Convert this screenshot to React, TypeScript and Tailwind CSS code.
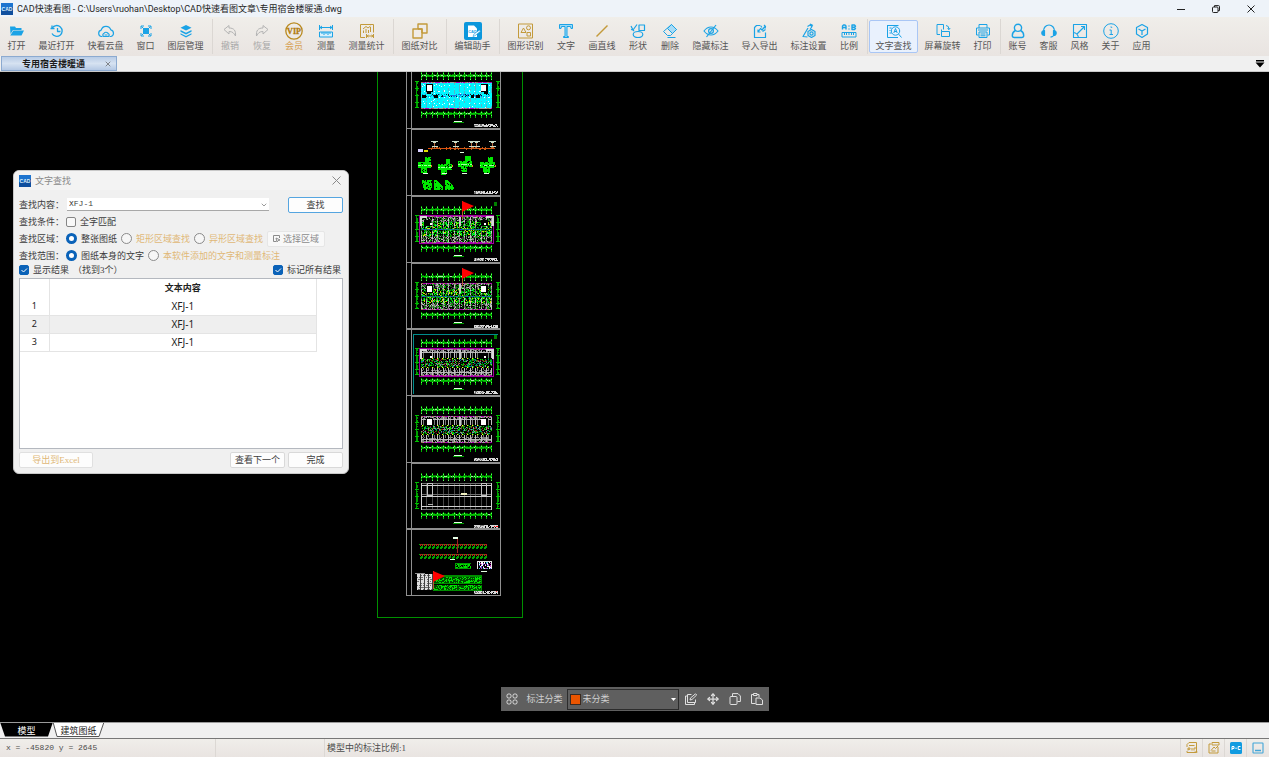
import { ReactNode, useState } from "react";
import { ChevronDown, Move, X } from "lucide-react";

type Tool = {
  label: string;
  icon: ReactNode;
  width: string;
  tone?: string;
  active?: boolean;
  disabled?: boolean;
};

const W2 = "w-[31px]";
const W2_WIDE = "w-8";
const W3 = "w-10";
const W4 = "w-[49px]";

const BLUE = "#1ba3e6";
const GOLD = "#c39a3b";

type IconProps = { color?: string; children: ReactNode; width?: number };

function Icon({ color = BLUE, children, width = 1 }: IconProps) {
  return (
    <svg
      aria-hidden="true"
      className="size-[18px] shrink-0"
      fill="none"
      stroke={color}
      strokeLinejoin="round"
      strokeWidth={width}
      viewBox="-1 -1 18 18"
    >
      {children}
    </svg>
  );
}

function AppLogo() {
  return (
    <svg aria-hidden="true" className="size-3 shrink-0" viewBox="0 0 12 12">
      <rect fill="#0f4f9e" height="12" width="12" />
      <path d="M0 0h12v4L0 7z" fill="#1d74cf" />
      <text
        fill="#dff1ff"
        fontFamily="Liberation Sans"
        fontSize="5"
        fontWeight="700"
        textAnchor="middle"
        x="6"
        y="8"
      >
        CAD
      </text>
    </svg>
  );
}

const toolGroups: Tool[][] = [
  [
    {
      label: "打开",
      width: W2,
      icon: (
        <Icon>
          <path d="M1 3.500h5l1 1.500h5.500v2H4L1.500 11z" fill={BLUE} stroke="none" />
          <path d="M4.400 7.500H15L12.500 12.500H1.200z" fill={BLUE} stroke="none" />
        </Icon>
      ),
    },
    {
      label: "最近打开",
      width: W4,
      icon: (
        <Icon width={1.3}>
          <path d="M3.200 5A5.400 5.400 0 1 1 3 10.500" />
          <path d="M1.500 5.500h4M3 2.500v3M8.500 5v3.500h3" />
        </Icon>
      ),
    },
    {
      label: "快看云盘",
      width: W4,
      icon: (
        <Icon width={1.2}>
          <path d="M4.500 13.500h-1a3.200 3.200 0 0 1-.3-6.300 5 5 0 0 1 9.600-.3 3.400 3.400 0 0 1 .2 6.600h-1.500" />
          <path d="M5.500 13.500q-1.500-2 .3-3 2-2.500 4.400 0 1.800 1 .3 3zM6.500 12h3" />
        </Icon>
      ),
    },
    {
      label: "窗口",
      width: W2,
      icon: (
        <Icon>
          <rect fill={BLUE} height="6" stroke="none" width="6" x="5" y="5" />
          <path d="M3 6V3h3M10 3h3v3M13 10v3h-3M6 13H3v-3M3.500 3.500l2 2M12.500 3.500l-2 2M12.500 12.500l-2-2M3.500 12.500l2-2" />
        </Icon>
      ),
    },
    {
      label: "图层管理",
      width: W4,
      icon: (
        <Icon>
          <path d="M8 2l5.500 2.800L8 7.600 2.500 4.800z" fill={BLUE} stroke="none" />
          <path d="M2.500 7L8 9.700 13.500 7v1.800L8 11.600 2.500 8.800z" fill={BLUE} stroke="none" />
          <path d="M2.500 10.300L8 13l5.500-2.700v1.300L8 14.500l-5.500-2.900z" fill={BLUE} stroke="none" />
        </Icon>
      ),
    },
  ],
  [
    {
      label: "撤销",
      width: W2_WIDE,
      tone: "text-[#a9a9a9]",
      disabled: true,
      icon: (
        <Icon color="#b4b4b4">
          <path d="M2 6.500L7 2.500v2.500c5 0 7 2.500 6.500 8-1.500-3-3-4.500-6.500-4.500v2.500z" />
        </Icon>
      ),
    },
    {
      label: "恢复",
      width: W2_WIDE,
      tone: "text-[#a9a9a9]",
      disabled: true,
      icon: (
        <Icon color="#b4b4b4">
          <path d="M14 6.500L9 2.500v2.500c-5 0-7 2.500-6.500 8 1.500-3 3-4.500 6.500-4.500v2.500z" />
        </Icon>
      ),
    },
    {
      label: "会员",
      width: W2_WIDE,
      tone: "text-[#d6a050]",
      icon: (
        <Icon color="#b98a20" width={1.3}>
          <circle cx="8" cy="8" r="8.2" />
          <text
            fill="#b07c10"
            fontFamily="Liberation Serif"
            fontSize="8"
            fontWeight="700"
            stroke="#b07c10"
            strokeWidth=".3"
            textAnchor="middle"
            x="8"
            y="10.800"
          >
            VIP
          </text>
        </Icon>
      ),
    },
    {
      label: "测量",
      width: W2_WIDE,
      icon: (
        <Icon>
          <path d="M1.500 2v5M14.500 2v5M2 4.500h12M4 3L2 4.500 4 6M12 3l2 1.500L12 6" />
          <rect fill="#d9f0fb" height="5" width="13" x="1.500" y="9" />
          <path d="M4 9v2M6 9v3M8 9v2M10 9v3M12 9v2" />
        </Icon>
      ),
    },
    {
      label: "测量统计",
      width: W4,
      icon: (
        <Icon color={GOLD}>
          <path d="M6 14.500H1.500v-13h13v8" />
          <path d="M4.500 10V7.500M7 10V6M9.500 10V7M11.500 9V4M4 6l3-2.500 2 1.500 2.500-2M7.500 11v4M14.500 11v4M8 13h6M9.500 12L8 13l1.500 1M12.500 12l1.500 1-1.500 1" />
        </Icon>
      ),
    },
  ],
  [
    {
      label: "图纸对比",
      width: W4,
      icon: (
        <Icon color={GOLD} width={1.4}>
          <rect height="9" width="9" x="6" y="1" />
          <rect fill="#f0ece8" height="9" width="9" x="1" y="6" />
          <path d="M6 6h4v4" />
        </Icon>
      ),
    },
  ],
  [
    {
      label: "编辑助手",
      width: W4,
      icon: (
        <Icon>
          <rect fill="#0c97dc" height="18" rx="2" stroke="none" width="18" x="-1" y="-1" />
          <path d="M3 2.500h6l3 3v8.500H3z" fill="#fff" stroke="none" />
          <text fill={BLUE} fontFamily="Liberation Sans" fontSize="4" fontWeight="700" stroke="none" x="3.200" y="9.500">
            CAD
          </text>
          <path d="M8 13.500l1-2.500 5.500-4 1 1.200-5.500 4.500z" fill="#fff" stroke="#0c97dc" strokeWidth=".6" />
        </Icon>
      ),
    },
  ],
  [
    {
      label: "图形识别",
      width: W4,
      icon: (
        <Icon color={GOLD}>
          <rect height="14" width="14" x=".5" y="1" />
          <path d="M3 9.500l2.500-4.500L8 9.500z" />
          <circle cx="10.500" cy="4.800" r="2" />
          <rect height="3.500" width="3.500" x="9" y="9.500" />
        </Icon>
      ),
    },
    {
      label: "文字",
      width: W2_WIDE,
      icon: (
        <Icon>
          <path d="M1.500 1.500h13v4h-1.500l-.5-2H9v10h1.500v1h-5v-1H7v-10H3.500l-.5 2H1.500z" fill="#9bd9f7" />
        </Icon>
      ),
    },
    {
      label: "画直线",
      width: W3,
      icon: (
        <Icon color={GOLD} width={1.4}>
          <path d="M2.500 13.500L13.500 2.500" />
        </Icon>
      ),
    },
    {
      label: "形状",
      width: W2_WIDE,
      icon: (
        <Icon width={1.2}>
          <path d="M1 3l2 4 4-5.500M1 6.500l2 .5 1 1" />
          <rect height="5.500" width="5.500" x="9" y="2" />
          <ellipse cx="8" cy="11.500" rx="4.800" ry="3" />
        </Icon>
      ),
    },
    {
      label: "删除",
      width: W2_WIDE,
      icon: (
        <Icon>
          <path d="M9.500 1.500l5 5-6 6h-3l-4-4z" />
          <path d="M9.500 1.500l5 5-4 4-5-5z" fill="#a9dcf6" />
          <path d="M5.500 14.500h8" />
        </Icon>
      ),
    },
    {
      label: "隐藏标注",
      width: W4,
      icon: (
        <Icon width={1.2}>
          <path d="M1 8q3-4 7-4t7 4q-3 4-7 4T1 8z" />
          <circle cx="8" cy="8" r="2.400" />
          <path d="M13 2L3.500 14" />
        </Icon>
      ),
    },
    {
      label: "导入导出",
      width: W4,
      icon: (
        <Icon width={1.2}>
          <path d="M8 2.500H4.500L2.500 4.500v10h11V9.500" />
          <path d="M6 9l2.500-3.500 1.500 1.500 3-3.500M8.500 2.500l1.500 2M10.500 8.500l3-2M12 2l1.500 1.500-.5 2M6 6.500V9h2.500" />
        </Icon>
      ),
    },
    {
      label: "标注设置",
      width: W4,
      icon: (
        <Icon width={1.2}>
          <path d="M7 5L2 13.500l4.500.5M6.500 3.500L9 2l2 1.500-2 3M9 1l3 1.500" />
          <path d="M10.500 6.500l3.500 2v4l-3.500 2-3.500-2v-4z" />
          <circle cx="10.500" cy="10.500" r="1.600" />
        </Icon>
      ),
    },
    {
      label: "比例",
      width: W2_WIDE,
      icon: (
        <Icon>
          <path
            d="M1.500 6.500V3l1-1h1.500l1 1v3.500M1.500 4.500h3.500M8 2.500v1M8 5.500v1M11 2v4.500h2.500l1-1-1-1.200 1-1.100-1-1.200zM11 4.300h2.500"
            strokeWidth="1.400"
          />
          <path d="M1 9.500h14v4.500H1zM3.500 10v2M5.500 10v2M8 10v2M10.500 10v2M12.500 10v2" />
        </Icon>
      ),
    },
  ],
  [
    {
      label: "文字查找",
      width: W4,
      active: true,
      icon: (
        <Icon>
          <path d="M12 14.500H1.500v-12h11M1 2.500h11M3.500 5h2M3.500 7.500h1M3.500 10h2" />
          <circle cx="9.500" cy="8" r="4.200" />
          <path d="M12.500 11l3 3.500M7.800 10l1.700-4.500L11.200 10M8.300 8.500h2.400" />
        </Icon>
      ),
    },
    {
      label: "屏幕旋转",
      width: W4,
      icon: (
        <Icon>
          <path d="M5 11.500H2v-10h6.500v5" />
          <path d="M6.500 8.500h8v5h-8zM11 2.500q3 0 3 4M12.500 5.500l1.500 1 1.200-1.500M6.500 8.500v-2" />
        </Icon>
      ),
    },
    {
      label: "打印",
      width: W2,
      icon: (
        <Icon>
          <path d="M4 5V1.500h8V5M3.500 12H1.500V5h13v7h-2" />
          <path d="M4 9h8v5.500H4zM3 7h10M5.500 11h5M5.500 12.800h5" />
        </Icon>
      ),
    },
  ],
  [
    {
      label: "账号",
      width: W2,
      icon: (
        <Icon width={1.4}>
          <circle cx="8" cy="4.800" r="3.600" />
          <path d="M5.500 7.500C3.500 8.500 2.300 10.500 2.300 12.500q0 2 2 2h7.400q2 0 2-2c0-2-1.200-4-3.200-5" />
        </Icon>
      ),
    },
    {
      label: "客服",
      width: W2,
      icon: (
        <Icon width={1.2}>
          <path d="M2.500 8a5.500 6 0 0 1 11 0M13.500 11q-.5 2.500-4 3.200" />
          <path d="M3.500 7.500v5Q.8 12.500.8 10t2.700-2.500zM12.500 7.500v5q2.700 0 2.700-2.500t-2.700-2.500z" fill={BLUE} />
        </Icon>
      ),
    },
    {
      label: "风格",
      width: W2,
      icon: (
        <Icon width={1.1}>
          <rect height="13" width="13" x="1.500" y="1.500" />
          <path d="M4.500 11.500l8-8M9 3.500h3.500V7M1.500 9.500q4 .5 5 5" />
        </Icon>
      ),
    },
    {
      label: "关于",
      width: W2,
      icon: (
        <Icon>
          <circle cx="8" cy="8" r="7.300" />
          <path d="M7.500 4h1.200v.8M6.500 7H8.200v4.500M6.500 11.500H10" />
        </Icon>
      ),
    },
    {
      label: "应用",
      width: W2,
      icon: (
        <Icon width={1.2}>
          <path d="M8 1.500l5.500 3v6.500L8 14.500 2.500 11V4.500z" />
          <path d="M4.500 6L8 8l3.500-2M8 8v4" />
        </Icon>
      ),
    },
  ],
];

function TitleBar() {
  return (
    <header className="flex h-[17px] shrink-0 items-center justify-between bg-[#eef3f9] pl-px">
      <h1 className="flex items-center gap-1 font-['Roboto','Noto_Sans_CJK_SC',sans-serif] text-[9px] leading-4 whitespace-nowrap text-[#1f1f1f]">
        <AppLogo />
        CAD快速看图 - C:\Users\ruohan\Desktop\CAD快速看图文章\专用宿舍楼暖通.dwg
      </h1>
      <div className="flex pr-[14px]">
        <button aria-label="最小化" className="flex w-[35px] items-center justify-center" type="button">
          <svg className="size-2" fill="none" stroke="#222" viewBox="0 0 8 8">
            <path d="M0 4.500h8" />
          </svg>
        </button>
        <button aria-label="还原" className="flex w-[35px] items-center justify-center" type="button">
          <svg className="size-2" fill="none" stroke="#222" viewBox="0 0 8 8">
            <rect height="5.500" rx="1" width="5.500" x=".5" y="2" />
            <path d="M2.500 2V.6h4q1 0 1 1v4H6" />
          </svg>
        </button>
        <button aria-label="关闭" className="ml-[14px] flex w-2 items-center justify-center" type="button">
          <svg className="size-2" fill="none" stroke="#222" viewBox="0 0 8 8">
            <path d="M.5.500l7 7M7.500.500l-7 7" />
          </svg>
        </button>
      </div>
    </header>
  );
}

function Toolbar() {
  return (
    <nav className="flex h-[39px] shrink-0 items-center overflow-hidden bg-gradient-to-b from-[#f0eeea] to-[#e9e4e1] pl-px">
      {toolGroups.map((group, index) => (
        <div className="flex shrink-0 items-center" key={group[0].label}>
          {index > 0 ? <span className="mr-px ml-0.5 h-[35px] w-px bg-[#dbd7d3]" /> : null}
          {group.map((tool) => (
            <button
              className={`flex h-[33px] flex-col items-center justify-center rounded-xs border text-[9px] leading-3 whitespace-nowrap ${tool.width} ${tool.tone ?? "text-[#555]"} ${tool.active ? "border-[#a9c6f5] bg-[#e9f1fd]" : "border-transparent"}`}
              disabled={tool.disabled}
              key={tool.label}
              type="button"
            >
              {tool.icon}
              {tool.label}
            </button>
          ))}
        </div>
      ))}
    </nav>
  );
}

function FileTabs() {
  return (
    <div className="flex h-4 shrink-0 items-center justify-between border-b border-[#c9c9c9] bg-[#f0f0f0] pr-1 pl-px">
      <div className="flex h-[15px] w-29 items-center justify-between border border-[#8caad0] bg-gradient-to-b from-[#b9cce6] via-[#d6e2f1] to-[#b4c8e4] pr-1 pl-5">
        <button className="text-[9px] leading-3 font-bold text-[#1c1c1c]" type="button">
          专用宿舍楼暖通
        </button>
        <button aria-label="关闭标签" className="text-[#555]" type="button">
          <X className="size-2" />
        </button>
      </div>
      <button aria-label="标签列表" type="button">
        <svg className="size-[10px]" viewBox="0 0 10 10">
          <path d="M1 1h8v1.500H1zM.5 3.500h9L5 8.500z" fill="#000" />
        </svg>
      </button>
    </div>
  );
}

// deterministic noise so the drawing is stable between renders
function noise(x: number, y: number, seed: number) {
  const n = Math.sin(x * 127.1 + y * 311.7 + seed * 74.7) * 43758.5453;
  return n - Math.floor(n);
}

type Painter = (x: number, y: number) => string | null;

function Pixels({ x, y, w, h, paint }: { x: number; y: number; w: number; h: number; paint: Painter }) {
  const paths = new Map<string, string>();

  for (let row = 0; row < h; row++) {
    for (let col = 0; col < w; col++) {
      const color = paint(col, row);

      if (color) {
        paths.set(color, `${paths.get(color) ?? ""}M${x + col} ${y + row}h1v1h-1z`);
      }
    }
  }

  return (
    <>
      {[...paths].map(([color, d]) => (
        <path d={d} fill={color} key={color} />
      ))}
    </>
  );
}

function pick(colors: string[], value: number) {
  return colors[Math.floor(value * colors.length) % colors.length];
}

const bays = [0, 5, 11, 16, 22, 27, 33, 38, 43, 49, 54, 60, 65, 70];

function Dimensions({ y, seed }: { y: number; seed: number }) {
  const band = (x: number, row: number, main: number) => {
    if (bays.includes(x)) {
      return row % 3 === 1 ? "#5dff5d" : "#00b400";
    }

    const n = noise(x, row, seed);

    if (row === main) {
      return n > 0.8 ? "#a8e8a8" : "#00c800";
    }

    if (row === main + 1) {
      return n > 0.25 ? "#00a400" : "#003c00";
    }

    if (row === main - 1) {
      return bays.includes(x - 1) || bays.includes(x + 1) || n > 0.5 ? "#007000" : null;
    }

    return null;
  };

  return (
    <>
      <Pixels h={8} paint={(x, row) => band(x, row, 3)} w={71} x={421} y={y + 11} />
      <Pixels h={7} paint={(x, row) => band(x, row, 2)} w={71} x={421} y={y + 50} />
      {[415, 496].map((x) => (
        <Pixels
          h={27}
          key={x}
          paint={(col, row) => {
            if (row % 7 === 0 || row === 26) {
              return "#00c000";
            }

            return col === 1 || (col === 2 && noise(col, row, seed) > 0.3) ? "#00a000" : null;
          }}
          w={4}
          x={x}
          y={y + 20}
        />
      ))}
      <rect fill="#e8ffe8" height="1" width="8" x="454" y={y + 60} />
      <rect fill="#00a000" height="1" width="11" x="453" y={y + 61} />
    </>
  );
}

type PlanKind = "cyan" | "dense" | "central" | "outline";

function paintPlan(kind: PlanKind, seed: number): Painter {
  return (x, y) => {
    const n = noise(x, y, seed);
    const onBay = bays.includes(x);
    const edge = y === 0 || y === 26;

    if (edge && kind !== "outline") {
      return x % 11 < 2 ? "#a5785a" : n > 0.4 ? "#b000b0" : "#a0a0a0";
    }

    if (kind === "cyan") {
      if (y >= 12 && y <= 14) {
        return n > 0.85 ? "#0a1830" : n > 0.6 ? "#1878e0" : "#00ffff";
      }

      if (onBay) {
        return n > 0.4 ? "#58b4c8" : "#00ffff";
      }

      return (x % 5 === 3 && y % 6 === 3) || n > 0.96 ? "#e8ffff" : "#00f4ff";
    }

    if (kind === "outline") {
      if (y === 2 || y === 23 || y === 13 || x === 0 || x === 70) {
        return "#d0d0d0";
      }

      if (y === 0 || y === 26 || y === 11) {
        return "#707070";
      }

      return onBay ? "#484848" : null;
    }

    if (kind === "central") {
      if (y >= 10 && y <= 17) {
        if (n > 0.4) {
          return pick(["#00c800", "#008888", "#902020", "#00e000", "#006000", "#909090"], n * 7);
        }

        return null;
      }

      if (y === 9 || y === 18) {
        return x % 5 === 1 ? "#ffff00" : x % 5 === 2 ? "#00a000" : null;
      }

      if (onBay) {
        return "#c0c0c0";
      }

      if (y === 3 || y === 23) {
        return "#b8b8b8";
      }

      if (y < 3 || y > 20) {
        return n > 0.4 ? "#808080" : null;
      }

      return bays.includes(x - 2) ? "#787878" : null;
    }

    // rooms: grey walls on the bays, green pipework between them
    if (onBay) {
      return y > 11 && y < 15 ? "#208020" : pick(["#a0a0a0", "#707070", "#c8c8c8"], n);
    }

    if (y === 13) {
      return n > 0.5 ? "#2050c0" : "#008080";
    }

    if (y >= 6 && y <= 19) {
      return n < 0.35 ? null : pick(["#00e000", "#00c000", "#005800", "#c8e000", "#00ff40", "#008c00"], n * 9);
    }

    return n < 0.35 ? null : pick(["#909090", "#585858", "#00b000", "#b8b8b8", "#383838", "#006c00"], n * 11);
  };
}

function Flag({ x, y }: { x: number; y: number }) {
  return (
    <g shapeRendering="auto">
      <rect fill="#b06030" height="18" width="1" x={x - 1} y={y} />
      <path d={`M${x - 1} ${y}l12 5l-12 6z`} fill="#ff0000" />
    </g>
  );
}

function Sheet({ y, children }: { y: number; children?: ReactNode }) {
  return (
    <g>
      <path
        d={`M406 ${y}.5H500M406.5 ${y}V${y + 67}M411.5 ${y + 1}V${y + 67}M412 ${y + 1}.500H500M500.500 ${y}V${y + 67}M406 ${y + 67}.500H501`}
        fill="none"
        stroke="#909090"
      />
      {children}
      <Pixels
        h={3}
        paint={(col, row) => {
          const n = noise(col, row, y);

          if (col > 9 && n < 0.35) {
            return null;
          }

          return n > 0.35 ? "#d8d8d8" : "#707070";
        }}
        w={24}
        x={474}
        y={y + 63}
      />
    </g>
  );
}

function Plan({ y, kind, rooms, outline }: { y: number; kind: PlanKind; rooms?: boolean; outline?: boolean }) {
  return (
    <Sheet y={y}>
      <Dimensions seed={y} y={y} />
      <Pixels h={27} paint={paintPlan(kind, y)} w={71} x={421} y={y + 21} />
      {outline ? (
        <>
          <rect fill="none" height="28" stroke="#a000a0" width="74" x="419.5" y={y + 20.5} />
          <path
            d={`M420.5 ${y + 31}V${y + 21}.5H427M486 ${y + 21}.5h6.500V${y + 31}`}
            fill="none"
            stroke="#d8d8d8"
            strokeWidth="2"
          />
          <rect fill="#008000" height="4" width="3" x="494" y={y + 7} />
          <rect fill="#000" height="6" width="7" x="424" y={y + 25} />
          <rect fill="#fff" height="2" width="2" x="430" y={y + 28} />
          <rect fill="#000" height="6" width="7" x="481" y={y + 25} />
          <rect fill="#fff" height="2" width="2" x="484" y={y + 28} />
        </>
      ) : null}
      {rooms ? (
        <>
          <rect fill="#000" height="8" width="7" x="426" y={y + 23} />
          <rect fill="#fff" height="6" width="5" x="427" y={y + 24} />
          <rect fill="#000" height="8" width="7" x="481" y={y + 23} />
          <rect fill="#fff" height="6" width="5" x="481" y={y + 24} />
        </>
      ) : null}
      {kind === "cyan" ? (
        <path
          d={`M422 ${y + 34}h4v3h-4zM434 ${y + 34}h4v3h-4zM471 ${y + 34}h3v3h-3zM476 ${y + 34}h4v3h-4zM427 ${y + 31}h4v2h-4zM484 ${y + 31}h4v2h-4z`}
          fill="#000"
        />
      ) : null}
      {kind === "outline" ? (
        <>
          <rect fill="none" height="12" stroke="#c0c0c0" width="5" x="427.5" y={y + 21.5} />
          <rect fill="none" height="12" stroke="#c0c0c0" width="5" x="481.5" y={y + 21.5} />
          <rect fill="#f0f0c0" height="2" width="6" x="461" y={y + 31} />
          <rect fill="#b0b0b0" height="1" width="5" x="428" y={y + 42} />
          <rect fill="#ff0000" height="2" width="4" x="494" y={y + 63} />
        </>
      ) : null}
      {kind === "dense" || kind === "central" ? (
        <rect fill="#c8c8c8" height="9" width="2" x="459" y={y + 22} />
      ) : null}
    </Sheet>
  );
}

const blobs = [
  [418, 157, 13],
  [437, 159, 15],
  [457, 156, 15],
  [479, 157, 16],
];

function EquipmentSheet({ y }: { y: number }) {
  return (
    <Sheet y={y}>
      <rect fill="#e05010" height="1" width="66" x="428" y="148" />
      <Pixels
        h={3}
        paint={(x, row) => (noise(x, row, 3) > 0.75 ? "#c06018" : null)}
        w={68}
        x={427}
        y={147}
      />
      {[434, 455, 471, 476, 492].map((x) => (
        <g key={x}>
          <rect fill="#c07040" height="8" width="1" x={x} y="141" />
          <path d={`M${x - 3} 141h7v1h-7zM${x - 1} 142h3v1h-3zM${x - 2} 146h6v1h-6z`} fill="#c8dcc8" />
        </g>
      ))}
      <rect fill="#d8d0ff" height="3" width="5" x="418" y="149" />
      <rect fill="#e0e000" height="2" width="4" x="424" y="150" />
      <rect fill="#e0ffe0" height="1" width="4" x="460" y="152" />
      {blobs.map(([x, top, w], index) => (
        <g key={x}>
          <Pixels
            h={16}
            paint={(col, row) => {
              const n = noise(col, row, x);
              const half = row < 5 ? (index % 2 ? 2 : 3) : row < 11 ? 7 : 3;
              const shift = row < 5 ? 3 : row < 11 ? 0 : -1;

              if (Math.abs(col - w / 2 - shift) > half || n < 0.1) {
                return null;
              }

              return row === 8 && n > 0.3 ? "#a0ffa0" : "#00e800";
            }}
            w={w}
            x={x}
            y={top}
          />
          <rect fill="#e0ffe0" height="1" width="5" x={x + 5} y="173" />
          <rect fill="#e08020" height="2" width="1" x={x + w} y="165" />
        </g>
      ))}
      {[422, 434, 445].map((x, index) => (
        <Pixels
          h={10}
          key={x}
          paint={(col, row) => {
            const inside = index === 0 ? Math.abs(col - 5) < 6 - Math.floor(row / 4) : col < 3 + row && col < 9;

            return inside && noise(col, row, x) > 0.1 ? "#00e800" : null;
          }}
          w={10}
          x={x}
          y={180}
        />
      ))}
    </Sheet>
  );
}

function ScheduleSheet({ y }: { y: number }) {
  return (
    <Sheet y={y}>
      {[543, 553].map((top) => (
        <Pixels
          h={6}
          key={top}
          paint={(x, row) => {
            if (row === 1) {
              return x % 4 === 0 ? "#00b000" : "#b02020";
            }

            return row > 1 && x % 4 > 0 && (x + row) % 4 !== 0 ? (row === 2 ? "#a04010" : "#00a000") : null;
          }}
          w={68}
          x={419}
          y={top}
        />
      ))}
      <rect fill="#e8ffe8" height="2" width="5" x="453" y="537" />
      <rect fill="#a02020" height="14" width="1" x="457" y="539" />
      <rect fill="#e0ffe0" height="1" width="5" x="450" y="559" />
      <Pixels
        h={6}
        paint={(x, row) => (x % 4 === 0 || row % 5 === 0 ? "#00a000" : noise(x, row, 5) > 0.2 ? "#00e000" : null)}
        w={16}
        x={455}
        y={563}
      />
      <path d="M477.5 561v8M477 561.500h14M491.500 561v8" fill="none" stroke="#e8e8e8" />
      <Pixels
        h={7}
        paint={(x, row) =>
          noise(x, row, 8) > 0.35 ? pick(["#fff", "#c040c0", "#40d0e0", "#fff", "#4060e0"], noise(row, x, 9)) : null
        }
        w={12}
        x={479}
        y={562}
      />
      <rect fill="#e0ffe0" height="1" width="6" x="481" y="571" />
      <rect fill="#909090" height="1" width="10" x="415" y="573" />
      <Pixels
        h={16}
        paint={(x, row) => (x % 4 === 3 ? "#404040" : row % 2 === 0 || noise(x, row, 2) > 0.5 ? "#e0e0e0" : "#707070")}
        w={16}
        x={417}
        y={574}
      />
      <Pixels
        h={16}
        paint={(x, row) => {
          if (row === 9) {
            return null;
          }

          if (row % 8 < 2 || row === 15 || x === 48) {
            return "#008c00";
          }

          return noise(x, row, 6) > 0.55 ? "#00e000" : "#004800";
        }}
        w={49}
        x={433}
        y={575}
      />
      <rect fill="#ff4040" height="2" width="4" x="494" y={y + 63} />
      <Flag x={434} y={571} />
    </Sheet>
  );
}

function Drawing() {
  return (
    <svg
      aria-label="图纸"
      className="absolute top-0 left-[377px] h-[546px] w-[146px]"
      role="img"
      shapeRendering="crispEdges"
      viewBox="377 72 146 546"
    >
      <rect fill="none" height="560" stroke="#009000" width="145" x="377.5" y="57.5" />
      <Plan kind="cyan" rooms y={61} />
      <EquipmentSheet y={128} />
      <Plan kind="dense" outline y={195} />
      <Plan kind="dense" rooms y={262} />
      <Plan kind="central" outline y={328} />
      <path d="M413.5 394V334.500H498" fill="none" stroke="#008c8c" />
      <Plan kind="central" rooms y={395} />
      <Plan kind="outline" y={462} />
      <ScheduleSheet y={528} />
      <Flag x={463} y={201} />
      <Flag x={463} y={268} />
    </svg>
  );
}

type RadioProps = { name: string; label: string; checked: boolean; muted?: boolean; onSelect: () => void };

function Radio({ name, label, checked, muted, onSelect }: RadioProps) {
  return (
    <label className={`flex items-center gap-1 ${muted ? "text-[#e0b877]" : "text-[#3c3c3c]"}`}>
      <input
        checked={checked}
        className="size-[11px] appearance-none rounded-full border border-[#8a8a8a] bg-[#f6f6f6] checked:border-[3px] checked:border-[#0a62b8] checked:bg-white"
        name={name}
        onChange={onSelect}
        type="radio"
      />
      {label}
    </label>
  );
}

function Checkbox({ label, defaultChecked }: { label: string; defaultChecked?: boolean }) {
  return (
    <label className="flex items-center gap-1">
      <span className="relative flex size-[10px]">
        <input
          className="peer size-[10px] appearance-none rounded-xs border border-[#858585] bg-[#f8f8f8] checked:border-[#0a62b8] checked:bg-[#0a62b8]"
          defaultChecked={defaultChecked}
          type="checkbox"
        />
        <svg
          className="pointer-events-none absolute inset-0 hidden peer-checked:block"
          fill="none"
          stroke="#fff"
          viewBox="0 0 10 10"
        >
          <path d="M2.500 5l2 2 3.500-3.500" />
        </svg>
      </span>
      {label}
    </label>
  );
}

const results = ["XFJ-1", "XFJ-1", "XFJ-1"];
const buttonClass = "h-4 rounded-xs border border-[#d9d9d9] bg-[#fdfdfd]";

function FindDialog() {
  const [area, setArea] = useState("all");
  const [scope, setScope] = useState("drawing");

  return (
    <section
      aria-label="文字查找"
      className="absolute top-[98px] left-[13px] w-84 overflow-hidden rounded-md border border-[#c8c8c8] bg-[#f0f0f0] text-[9px] leading-3 text-[#3c3c3c]"
    >
      <div className="flex h-[19px] items-center justify-between bg-[#f3f3f3] pr-[7px] pl-[5px]">
        <h2 className="flex items-center gap-1 text-[#8a8a8a]">
          <AppLogo />
          文字查找
        </h2>
        <button aria-label="关闭" className="text-[#8a8a8a]" type="button">
          <svg className="size-[9px]" fill="none" stroke="currentColor" viewBox="0 0 9 9">
            <path d="M.5.500l8 8M8.500.500l-8 8" />
          </svg>
        </button>
      </div>

      <div className="px-[5px] pt-[6px] pb-[5px]">
        <div className="flex h-[17px] items-center justify-between">
          <div className="flex items-center">
            <label className="w-12" htmlFor="keyword">
              查找内容：
            </label>
            <span className="relative flex items-center">
              <select
                className="h-[13px] w-[202px] appearance-none border-b border-[#a8a8a8] bg-white pl-0.5 font-['Liberation_Mono','Noto_Sans_CJK_SC',monospace] text-[8px] leading-3"
                id="keyword"
              >
                <option>XFJ-1</option>
              </select>
              <ChevronDown className="pointer-events-none absolute right-px size-2 text-[#666]" />
            </span>
          </div>
          <button className="h-4 w-[55px] rounded-xs border border-[#55a5e0] bg-[#fdfdfd]" type="button">
            查找
          </button>
        </div>
        <div className="flex h-[17px] items-center">
          <span className="w-[47px]">查找条件：</span>
          <Checkbox label="全字匹配" />
        </div>
        <div className="flex h-[17px] items-center">
          <span className="w-[47px]">查找区域：</span>
          <div className="flex items-center gap-1">
            <Radio checked={area === "all"} label="整张图纸" name="area" onSelect={() => setArea("all")} />
            <Radio checked={area === "rect"} label="矩形区域查找" muted name="area" onSelect={() => setArea("rect")} />
            <Radio checked={area === "poly"} label="异形区域查找" muted name="area" onSelect={() => setArea("poly")} />
            <button
              className="flex h-4 w-[58px] items-center justify-center gap-0.5 rounded-xs border border-[#e6e6e6] bg-[#f8f8f8] text-[#8c8c8c]"
              disabled
              type="button"
            >
              <svg className="size-2" fill="none" stroke="#8c8c8c" viewBox="0 0 8 8">
                <path d="M3 6.500H.5v-6h6V3M3 3l1 4 1-1.500L7 5z" />
              </svg>
              选择区域
            </button>
          </div>
        </div>
        <div className="flex h-[17px] items-center">
          <span className="w-[47px]">查找范围：</span>
          <div className="flex items-center gap-1">
            <Radio
              checked={scope === "drawing"}
              label="图纸本身的文字"
              name="scope"
              onSelect={() => setScope("drawing")}
            />
            <Radio
              checked={scope === "added"}
              label="本软件添加的文字和测量标注"
              muted
              name="scope"
              onSelect={() => setScope("added")}
            />
          </div>
        </div>
        <div className="mb-0.5 flex h-3 items-center justify-between pr-0.5">
          <div className="flex items-center">
            <Checkbox defaultChecked label="显示结果" />
            <span className="pl-1">（找到3个）</span>
          </div>
          <Checkbox defaultChecked label="标记所有结果" />
        </div>

        <div className="mb-[3px] h-[171px] border border-[#b4b8bf] bg-white">
          <table className="w-[297px] table-fixed border-collapse text-center font-['Noto_Sans','Noto_Sans_CJK_SC',sans-serif] text-[#222]">
            <thead>
              <tr className="h-[18px]">
                <th className="w-[29px] border-r border-[#e4e4e4]" />
                <th className="border-r border-[#e4e4e4] font-bold">文本内容</th>
              </tr>
            </thead>
            <tbody>
              {results.map((text, index) => (
                <tr className={`h-[18px] border-b border-[#e4e4e4] ${index === 1 ? "bg-[#efefef]" : ""}`} key={index}>
                  <td className="border-r border-[#e4e4e4]">{index + 1}</td>
                  <td className="border-r border-[#e4e4e4] text-[10px]">{text}</td>
                </tr>
              ))}
            </tbody>
          </table>
        </div>

        <div className="flex justify-between">
          <button className="h-4 w-[74px] rounded-xs border border-[#e0e0e0] bg-[#fdfdfd] text-[#e0b877]" type="button">
            导出到Excel
          </button>
          <div className="flex gap-[3px]">
            <button className={`${buttonClass} w-[55px]`} type="button">
              查看下一个
            </button>
            <button className={`${buttonClass} w-[55px]`} type="button">
              完成
            </button>
          </div>
        </div>
      </div>
    </section>
  );
}

function CategoryBar() {
  return (
    <div className="absolute bottom-[11px] left-1/2 flex h-6 w-67 -translate-x-1/2 items-center bg-[#5f5f5f] text-[9px] leading-3 text-[#d0d0d0]">
      <button aria-label="全部分类" className="flex w-[22px] justify-center" type="button">
        <svg className="size-3" fill="none" stroke="#e0e0e0" viewBox="0 0 12 12">
          <rect height="4" rx="1.500" width="4" x="1" y="1" />
          <rect height="4" rx="1.500" width="4" x="7" y="1" />
          <rect height="4" rx="1.500" width="4" x="1" y="7" />
          <rect height="4" rx="1.500" width="4" x="7" y="7" />
        </svg>
      </button>
      <label className="px-1" htmlFor="category">
        标注分类
      </label>
      <span className="relative flex items-center">
        <select
          className="h-[21px] w-28 appearance-none border border-[#2c2c2c] bg-[#5f5f5f] pl-[15px] leading-3"
          id="category"
        >
          <option>未分类</option>
        </select>
        <span className="pointer-events-none absolute left-[3px] size-[11px] border border-[#3a2a20] bg-[#eb5500]" />
        <svg className="pointer-events-none absolute right-[3px] size-[5px]" viewBox="0 0 5 5">
          <path d="M0 1h5L2.500 4z" fill="#fff" />
        </svg>
      </span>
      <div className="flex flex-1 items-center justify-around pr-px pl-0.5">
        <button aria-label="编辑" type="button">
          <svg className="size-3" fill="none" stroke="#e0e0e0" viewBox="0 0 12 12">
            <path d="M2.500 3H.5v8.500h9V9.500M6.500 1.500h-4v8h8v-3M5 7l.5-2L10.500.8l1.200 1.200L7 6.500z" />
          </svg>
        </button>
        <button aria-label="移动" type="button">
          <Move className="size-3" color="#e0e0e0" strokeWidth={2.5} />
        </button>
        <button aria-label="复制" type="button">
          <svg className="size-3" fill="none" stroke="#e0e0e0" viewBox="0 0 12 12">
            <path d="M3.500 3.500V.6h5.500l2.400 2.400v5.500h-3" />
            <rect height="8" rx="1" width="7" x="1" y="3.500" />
          </svg>
        </button>
        <button aria-label="粘贴" type="button">
          <svg className="size-3" fill="none" stroke="#e0e0e0" viewBox="0 0 12 12">
            <path d="M4.500 10.500h-4v-9h2M6 1.500h2V4M2.500.5H6v2H2.500zM5 5h4l2.500 2v4.500H5z" />
          </svg>
        </button>
      </div>
    </div>
  );
}

function LayoutTabs() {
  return (
    <div className="flex h-[17px] shrink-0 border-t border-b border-t-[#9a9a9a] border-b-[#777] bg-[#f0f0f0] text-[9px] leading-[14px]">
      <button className="relative w-[53px] text-white" type="button">
        <svg className="absolute inset-0 size-full" preserveAspectRatio="none" viewBox="0 0 53 15">
          <path d="M0-1h53l-5 14.500H5z" fill="#000" />
        </svg>
        <span className="relative">模型</span>
      </button>
      <button className="relative w-[51px] text-[#222]" type="button">
        <svg className="absolute inset-0 size-full" preserveAspectRatio="none" viewBox="0 0 51 15">
          <path d="M0-1l4 14.500h42L51-1" fill="#fff" stroke="#555" />
        </svg>
        <span className="relative">建筑图纸</span>
      </button>
    </div>
  );
}

const statusIcons = [
  {
    label: "导出PDF",
    icon: (
      <Icon color={GOLD}>
        <path d="M3 7V4.500l2-2h7.500v10H3v-1.500" />
        <path d="M5 5.500h5.500M4 10.500V8h2v1.300H4M8 8v2.500M10 10.500V8h2M10.500 12h3" />
      </Icon>
    ),
  },
  {
    label: "PDF转换",
    icon: (
      <Icon color={GOLD}>
        <path d="M12 7v6H3V4h2M6 2.500h7v2.500H6z" />
        <path d="M5 10.500l3-3.500 1.500 1.500L12 6M5.500 11h4" />
      </Icon>
    ),
  },
  {
    label: "P-C",
    icon: (
      <Icon>
        <rect fill="#119be0" height="12" rx="1.500" stroke="none" width="12" x="2" y="2" />
        <path d="M4 10V6.500h2v2H4M7.300 8.200h1.500M12.500 6.500h-2.300V9.500h2.300" stroke="#fff" />
      </Icon>
    ),
  },
  {
    label: "窗口",
    icon: (
      <Icon color="#41a5d8" width={1.1}>
        <rect height="10" rx=".5" width="10" x="3" y="3" />
        <path d="M5 10.500h6" strokeWidth="1.500" />
      </Icon>
    ),
  },
];

function StatusBar() {
  return (
    <footer className="flex h-[18px] shrink-0 items-stretch bg-gradient-to-b from-[#f0eeea] to-[#e9e4e1] text-[9px] leading-[18px] text-[#4c4c4c]">
      <span className="w-54 border-r border-[#dcd8d4] pl-1.5 font-['Liberation_Mono','Noto_Sans_CJK_SC',monospace] text-[8px]">
        x = -45820 y = 2645
      </span>
      <span className="w-[109px] border-r border-[#dcd8d4]" />
      <span className="flex-1 pl-0.5">模型中的标注比例:1</span>
      <div className="flex pr-px">
        {statusIcons.map((item) => (
          <button
            aria-label={item.label}
            className="flex w-[22px] items-center justify-center border-l border-[#dcd8d4]"
            key={item.label}
            type="button"
          >
            {item.icon}
          </button>
        ))}
      </div>
    </footer>
  );
}

export default function App() {
  return (
    <div className="flex h-screen flex-col overflow-hidden bg-[#f0f0f0] font-['Liberation_Serif','Noto_Sans_CJK_SC',serif]">
      <TitleBar />
      <Toolbar />
      <FileTabs />
      <main className="relative flex-1 overflow-hidden bg-black">
        <Drawing />
        <FindDialog />
        <CategoryBar />
      </main>
      <LayoutTabs />
      <StatusBar />
    </div>
  );
}
